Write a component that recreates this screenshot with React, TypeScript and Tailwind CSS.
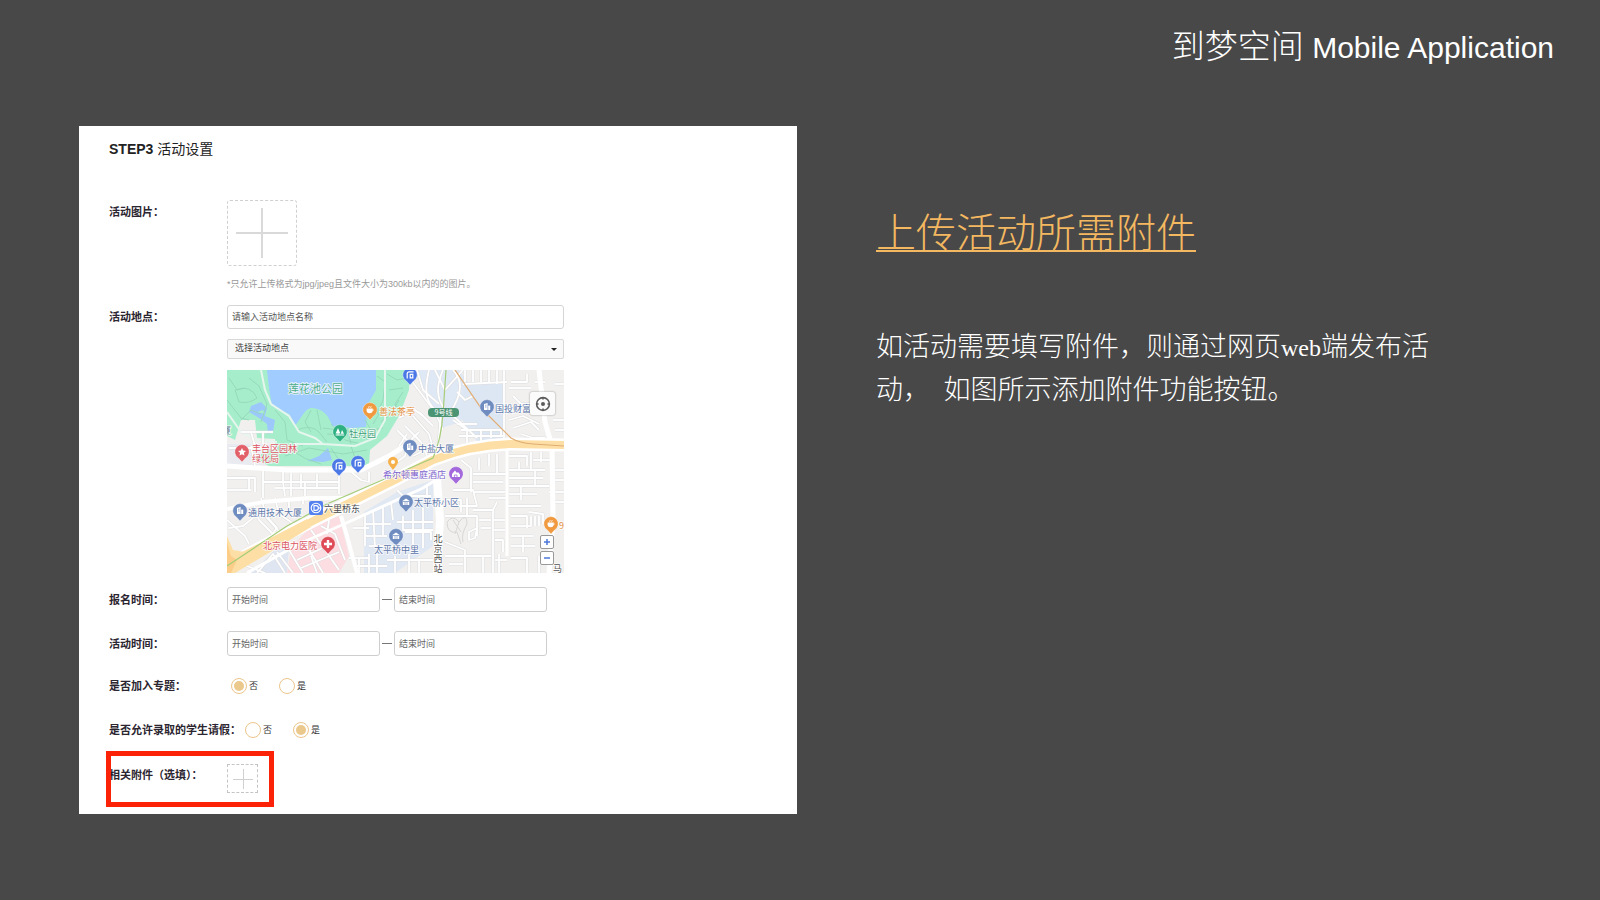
import type { ReactNode } from 'react';

interface PinProps {
  x: number;
  y: number;
  color: string;
  children?: ReactNode;
}

interface MapLabelProps {
  x: number;
  y: number;
  color: string;
  size?: number;
  anchor?: 'start' | 'middle';
  children: ReactNode;
}

const parkPaths = [
  'M0 30 L14 48 L22 50', 'M22 8 L32 16 L40 34 L34 52', 'M8 20 Q24 14 30 28 Q22 34 12 32 Z',
  'M48 40 L58 52 L60 70 L76 76', 'M70 60 Q84 54 92 62 L100 72', 'M96 58 L128 62 L142 70',
  'M104 54 L118 70 L134 74', 'M120 58 L124 74', 'M100 64 L146 66', 'M150 6 L158 12 L156 30 L150 44',
  'M160 4 L170 10 L180 8', 'M162 20 L176 18', 'M154 52 L164 44 L172 30', 'M64 80 Q78 90 94 94',
  'M58 86 L82 78 L116 84 L140 80', 'M104 78 L112 90', 'M124 76 L128 88', 'M2 8 L10 20 L18 18',
  'M84 40 L78 52 L84 62', 'M90 40 L94 60', 'M138 50 L144 60 L156 58', 'M14 50 L24 40 L34 44',
  'M146 54 L152 44 L148 34', 'M176 22 L168 34 L172 42',
];

const minorRoads = [
  // west blocks
  'M0 108 H28 V122', 'M36 101 V128', 'M36 112 H56 L58 126', 'M56 101 V112 H112', 'M64 103 V126',
  'M74 104 V118 H112', 'M78 112 V126', 'M90 104 V118', 'M112 102 V124', 'M48 118 H76', 'M0 120 H24',
  'M22 108 V120', 'M122 100 L134 110 L142 112 V102', 'M28 76 L24 62', 'M36 62 V74', 'M14 62 H46',
  'M2 78 H50', 'M24 76 L28 96', 'M34 128 L40 148 L58 168', 'M26 132 L32 150 L52 170',
  'M0 150 L18 166 L22 174', 'M36 142 L50 158 L44 166', 'M48 128 L52 144 L70 156',
  'M2 158 L16 156 L26 148', 'M62 130 V142', 'M76 128 V134',
  // hospital and south
  'M30 203 L46 184 L58 203', 'M50 182 L66 203', 'M20 196 L38 203', 'M62 180 L76 203', 'M76 170 L96 203',
  'M84 160 L112 200', 'M94 156 L108 164 L118 190', 'M70 190 L104 174', 'M74 198 L112 182',
  'M102 150 L100 164', 'M84 186 L90 203', 'M126 158 L142 158', 'M122 188 H142', 'M126 196 H160', 'M132 188 V203',
  // residential
  'M138 144 V176', 'M146 140 L148 178', 'M156 136 V166', 'M138 154 H164', 'M138 166 H160',
  'M164 132 L166 150', 'M142 176 H166', 'M142 184 V203', 'M150 184 V203', 'M170 120 L176 126 H204',
  'M176 146 V160 H206', 'M186 140 V176', 'M196 138 V178', 'M170 152 H206', 'M178 162 H204 V170',
  'M160 190 H206', 'M168 186 V203', 'M182 184 V203', 'M192 190 V203', 'M200 114 V130',
  // junction
  'M170 60 L182 72 L178 86 L170 92', 'M172 48 L188 40 L196 46', 'M178 56 L194 72 L200 86',
  'M186 46 L202 64 L206 78', 'M192 42 L206 56', 'M180 64 L172 76', 'M192 62 L184 70', 'M186 86 L198 80 L208 84',
  'M184 10 L208 42 L216 60', 'M190 0 L196 20 L212 34', 'M202 0 C196 24 200 36 214 44',
  'M216 0 C210 14 208 26 218 40', 'M208 0 L218 20 L236 0', 'M226 0 C236 10 236 24 222 44',
  'M214 44 L210 88', 'M222 42 L250 68', 'M226 50 L240 60 V78', 'M236 14 L280 12', 'M238 0 V12', 'M246 0 V12',
  'M254 0 V12', 'M262 0 V12', 'M270 0 V14', 'M230 22 L238 30 L246 26', 'M230 54 H250', 'M232 66 H276',
  'M234 60 H274 V66', 'M254 60 V74', 'M264 60 V68', 'M277 0 V72', 'M284 12 H300 V4', 'M282 18 H304',
  'M286 26 L294 34 H304', 'M284 40 L300 42', 'M282 50 L296 46 L312 54', 'M286 58 L304 52 L312 60',
  'M294 64 L306 68 H318', 'M308 12 H318', 'M328 14 H337', 'M326 50 H337', 'M328 60 H337',
  // east grid
  'M234 90 L244 98 V122', 'M226 120 H246 L250 136 H226', 'M246 104 H280', 'M252 88 V100', 'M262 84 V96',
  'M270 84 V104', 'M246 112 H276', 'M246 122 H278', 'M240 128 V146', 'M218 130 H234 V142', 'M218 146 H250 V166',
  'M282 86 H300 V96', 'M282 100 H318', 'M282 108 H316', 'M282 116 H322', 'M282 124 H310', 'M292 92 V100',
  'M304 82 V100', 'M308 100 V116', 'M294 116 V130', 'M306 90 H324', 'M314 82 V92', 'M322 122 H337',
  'M326 100 H337', 'M326 110 H337', 'M327 132 H337', 'M281 136 H314', 'M284 146 H300 V158', 'M284 156 H304',
  'M284 166 H306', 'M284 176 H308', 'M284 188 H300 V203', 'M296 166 V182', 'M302 142 L316 144 V154',
  'M304 146 V156', 'M308 146 V156', 'M312 146 V156', 'M266 140 V203', 'M266 150 H278', 'M266 160 H278',
  'M268 170 H276 V182', 'M268 190 H280', 'M246 140 H266 L270 132', 'M252 150 H264', 'M254 158 H264',
  'M242 162 L250 158 L248 168 L242 170 Z', 'M218 172 L238 180 V203', 'M218 186 H264', 'M256 186 V203',
  'M222 194 H236', 'M272 184 V203', 'M312 186 V203', 'M262 128 H280',
];

const mainRoads = [
  { d: 'M0 96 L60 100 H134 L162 86 L184 72', width: 5 },
  { d: 'M0 139 L36 132 L82 128 H132', width: 4 },
  { d: 'M114 146 L120 166 L130 203', width: 4 },
  { d: 'M210 108 L213 150 L210 203', width: 8 },
  { d: 'M280 74 V186', width: 3 },
  { d: 'M312 0 L318 52 L325 76 L326 150 L322 203', width: 5 },
  { d: 'M20 203 L70 175 L126 150 L196 118 L212 108', width: 3 },
];

const formLabel = 'shrink-0 min-w-[118px] text-[11px] leading-4 font-bold text-[#2b2530]';
const dateInput =
  'h-[25px] w-[153px] min-w-0 rounded-[3px] border border-[#ccced0] bg-white px-1 text-[9px] text-[#555] placeholder:text-[#666] outline-none';

const Pin = ({ x, y, color, children }: PinProps) => (
  <g transform={`translate(${x} ${y})`}>
    <path d="M0 10 L-3.6 6 A7.2 7.2 0 1 1 3.6 6 Z" fill={color} stroke="#fff" strokeOpacity="0.6" strokeWidth="0.6" />
    {children}
  </g>
);

const MapLabel = ({ x, y, color, size = 9, anchor = 'start', children }: MapLabelProps) => (
  <text
    x={x}
    y={y}
    fill={color}
    fontSize={size}
    textAnchor={anchor}
    dominantBaseline="central"
    stroke="#fff"
    strokeWidth="1.6"
    strokeOpacity="0.8"
    paintOrder="stroke"
  >
    {children}
  </text>
);

const BuildingGlyph = () => (
  <g fill="#fff">
    <path d="M-3 3 V-3 L0.6 -4 V3 Z" />
    <path d="M1.2 3 V-1.4 H3.2 V3 Z" />
    <path d="M-2 -1.8 H-0.4 M-2 0 H-0.4" stroke="#6f8cc0" strokeWidth="0.7" />
  </g>
);

const HomeGlyph = () => (
  <g fill="#fff">
    <path d="M-4 -0.8 L0 -3.6 L4 -0.8 Z" />
    <path d="M-3.2 0 H3.2 V3 H-3.2 Z" />
    <path d="M-1 0 V3 M1 0 V3" stroke="#6f8cc0" strokeWidth="0.6" />
  </g>
);

const BusGlyph = () => (
  <path d="M3.6 -3.2 H-0.8 Q-2.8 -3.2 -2.8 -1.2 V3.6 M3.4 -0.6 H0.2 V2.8 H2.8 V-0.4" fill="none" stroke="#fff" strokeWidth="1.2" />
);

const CupGlyph = () => (
  <g>
    <path d="M-3.4 -1.6 H2.6 V0.6 Q2.6 3.2 -0.4 3.2 Q-3.4 3.2 -3.4 0.6 Z" fill="#fff" />
    <path d="M2.4 -0.8 Q4.4 -0.6 2.2 1.2 M-1.4 -2.2 L-0.8 -3.8 M0.6 -2.2 L1.2 -3.8" fill="none" stroke="#fff" strokeWidth="0.9" />
  </g>
);

const CityMap = () => (
  <svg viewBox="0 0 337 203" className="block w-full font-['Noto_Sans_CJK_SC',sans-serif]" role="img" aria-label="活动地点">
    <rect width="337" height="203" fill="#f1f0ee" />

    {/* districts */}
    <path d="M0 74 H44 V95 H0 Z" fill="#e9ebf1" />
    <path d="M188 0 H232 L246 20 L234 52 L214 58 L200 30 Z" fill="#dfe8f5" />
    <path d="M238 14 H277 V72 L252 74 L240 58 L232 44 Z" fill="#dde6f3" />
    <path d="M137 142 L170 122 L206 110 V176 L168 203 H137 Z" fill="#e0e8f3" />
    <path d="M24 203 L48 180 L62 178 L60 203 Z" fill="#dfe6f1" />
    <path d="M60 203 L64 178 L84 156 L112 146 L122 186 L112 203 Z" fill="#fbdde2" />

    {/* park */}
    <path d="M0 0 H183 L182 20 L172 46 L160 66 L143 80 L142 96 H42 L28 88 L48 75 V69 L30 68 L28 50 L14 50 L8 70 L0 66 Z" fill="#a6eecb" />
    <path d="M40 0 H149 V20 L141 34 L139 57 L125 58 L105 56 C102 44 94 38 84 38 C76 40 74 50 68 55 L62 44 L45 36 L42 18 Z" fill="#a0ccff" />
    <path d="M24 36 L34 32 L40 38 L38 46 L48 50 L46 62 L41 64 L40 54 L32 48 L22 42 Z" fill="#9dc8fb" />
    <path d="M80 91 L92 86 L101 78 L105 90 L96 92 Z" fill="#9dc8fb" />
    <path d="M30 42 L36 40 L38 44 Z" fill="#a6eecb" />
    <g fill="none" stroke="#94d6b9" strokeWidth="0.9">
      {parkPaths.map(d => <path key={d} d={d} />)}
    </g>
    <g fill="none" stroke="#e6f6ee" strokeWidth="2">
      <path d="M34 0 L38 20 L44 34 L62 46 L72 62 L88 68 L96 74 L128 76 L148 68 L158 50 V0" />
      <path d="M0 42 L14 62 L30 70 L50 72" />
      <path d="M68 74 H96" />
    </g>

    {/* streets */}
    <g fill="none" stroke="#dcdcdd" strokeWidth="2.8" strokeLinejoin="round">
      {minorRoads.map(d => <path key={d} d={d} />)}
    </g>
    <g fill="none" stroke="#fff" strokeWidth="1.8" strokeLinejoin="round">
      {minorRoads.map(d => <path key={d} d={d} />)}
    </g>
    <g fill="none" stroke="#fff">
      {mainRoads.map(road => <path key={road.d} d={road.d} strokeWidth={road.width} />)}
    </g>
    <g fill="none" stroke="#d9d7d6" strokeWidth="1">
      <path d="M220 152 Q226 144 232 152 Q240 142 240 154 Q234 164 236 172 M220 152 Q220 164 230 162 L234 174 M226 150 L234 162 M232 152 L228 164" />
    </g>

    {/* ring road */}
    <path d="M0 196 L44 172 L100 144 L136 126 L170 109 L206 90 Q244 75 284 74 L337 75" fill="none" stroke="#fff" strokeWidth="13" />
    <path d="M0 194 L44 172 L100 144 L136 126 L170 109 L206 90 Q244 75 284 74 L337 75" fill="none" stroke="#fddfa6" strokeWidth="8" />
    <path d="M0 166 L6 180 L18 182 L44 168 L80 149 L84 157 L50 178 L8 203 H0 Z" fill="#fddfa6" />
    <path d="M0 172 L4 186 L10 190 L4 203 H0 Z" fill="#fbcd88" />

    {/* metro lines */}
    <path d="M0 196 L60 156 L100 134 L160 108 L206 88 Q214 70 216 44 L219 0" fill="none" stroke="#a5cd78" strokeWidth="1.2" />
    <path d="M228 0 L254 38 L284 68 Q292 73 306 74 L337 76" fill="none" stroke="#e0ac72" strokeWidth="1.2" />

    <MapLabel x={61} y={18} color="#4fae8c" size={11}>莲花池公园</MapLabel>
    <MapLabel x={-5} y={60} color="#666f88">厦</MapLabel>

    <Pin x={143} y={40} color="#f0993f"><CupGlyph /></Pin>
    <MapLabel x={152} y={41} color="#e58d3a">善法茶亭</MapLabel>

    <Pin x={113} y={62} color="#2fb083">
      <path d="M-2 -4 L0.4 1.6 H-4.4 Z M-2.4 1.6 H-1.6 V3 H-2.4 Z M2 -2 L4 1.8 H0.8 Z M-4.4 2.6 H4.2 V3.4 H-4.4 Z" fill="#fff" />
    </Pin>
    <MapLabel x={122} y={63} color="#3f9e79">牡丹园</MapLabel>

    <Pin x={15} y={82} color="#e2606a">
      <path d="M0 -4 L1.2 -1.4 L4 -1.1 L1.9 0.8 L2.5 3.6 L0 2.2 L-2.5 3.6 L-1.9 0.8 L-4 -1.1 L-1.2 -1.4 Z" fill="#fff" />
    </Pin>
    <MapLabel x={25} y={78} color="#dc5563">丰台区园林</MapLabel>
    <MapLabel x={25} y={88} color="#dc5563">绿化局</MapLabel>

    <Pin x={112} y={96} color="#4b78e6"><BusGlyph /></Pin>
    <Pin x={131} y={93} color="#4b78e6"><BusGlyph /></Pin>
    <Pin x={183} y={5} color="#4b78e6"><BusGlyph /></Pin>

    <g transform="translate(166 92)">
      <path d="M0 8 L-3.4 3.4 A5 5 0 1 1 3.4 3.4 Z" fill="#f6b04c" />
      <circle r="2" fill="#fff" />
    </g>
    <MapLabel x={156} y={104} color="#8064cf">希尔顿惠庭酒店</MapLabel>
    <Pin x={229} y={104} color="#a268dc">
      <path d="M-4 3 V0 L-1 -3.4 L1 -1 L2 -2 L4 0.6 V3 Z" fill="#fff" />
      <path d="M-1.6 3 V1 H1 V3" fill="none" stroke="#a268dc" strokeWidth="0.8" />
    </Pin>

    <rect x="201" y="38" width="31" height="9" rx="4" fill="#4b9473" />
    <text x="216.5" y="42" fill="#fff" fontSize="7" textAnchor="middle" dominantBaseline="central">9号线</text>

    <Pin x={260} y={37} color="#6f8cc0"><BuildingGlyph /></Pin>
    <MapLabel x={268} y={38} color="#5c76aa">国投财富</MapLabel>
    <Pin x={183} y={77} color="#6f8cc0"><BuildingGlyph /></Pin>
    <MapLabel x={191} y={78} color="#5c76aa">中盐大厦</MapLabel>
    <Pin x={179} y={132} color="#6f8cc0"><HomeGlyph /></Pin>
    <MapLabel x={187} y={132} color="#5c76aa">太平桥小区</MapLabel>
    <Pin x={169} y={166} color="#6f8cc0"><HomeGlyph /></Pin>
    <MapLabel x={147} y={179} color="#5c76aa">太平桥中里</MapLabel>
    <Pin x={13} y={141} color="#6f8cc0"><BuildingGlyph /></Pin>
    <MapLabel x={21} y={142} color="#5c76aa">通用技术大厦</MapLabel>

    <rect x="82" y="131" width="14" height="14" rx="2" fill="#5682ee" />
    <circle cx="89" cy="138" r="4.8" fill="none" stroke="#fff" strokeWidth="1.1" />
    <path d="M87 135.6 H89 Q91.4 135.8 91.4 138 Q91.4 140.2 89 140.4 H87 Z M91 138 H94" fill="none" stroke="#fff" strokeWidth="1.1" />
    <MapLabel x={97} y={138} color="#45484f">六里桥东</MapLabel>

    <MapLabel x={36} y={175} color="#dc5563">北京电力医院</MapLabel>
    <Pin x={101} y={174} color="#de4c58">
      <path d="M-1.2 -4 H1.2 V-1.2 H4 V1.2 H1.2 V4 H-1.2 V1.2 H-4 V-1.2 H-1.2 Z" fill="#fff" />
    </Pin>

    {['北', '京', '西', '站'].map((char, i) => (
      <MapLabel key={char} x={211} y={168 + i * 10} color="#555" anchor="middle">{char}</MapLabel>
    ))}
    <Pin x={324} y={154} color="#f0993f"><CupGlyph /></Pin>
    <MapLabel x={332} y={155} color="#e58d3a">9</MapLabel>
    <MapLabel x={326} y={198} color="#555">马</MapLabel>
  </svg>
);

const MapPanel = () => (
  <div className="relative mt-[11px] overflow-hidden">
    <CityMap />
    <button
      type="button"
      aria-label="定位"
      className="absolute top-[22px] right-[9px] flex h-[23px] w-[25px] items-center justify-center rounded-[2px] bg-[#fbfbfb] shadow-[0_0_2px_#888]"
    >
      <svg viewBox="0 0 16 16" className="size-4" fill="none" stroke="#5b5b5b" strokeWidth="1.6">
        <circle cx="8" cy="8" r="6.4" />
        <circle cx="8" cy="8" r="2" fill="#5b5b5b" stroke="none" />
        <path d="M8 1.6 V3.6 M8 12.4 V14.4 M1.6 8 H3.6 M12.4 8 H14.4" />
      </svg>
    </button>
    <div className="absolute right-[10px] bottom-2 flex flex-col gap-[2px]">
      <button type="button" aria-label="放大" className="flex size-[14px] items-center justify-center rounded-[2px] border border-[#999] bg-white">
        <svg viewBox="0 0 8 8" className="size-2" stroke="#4a78d8" strokeWidth="1.5"><path d="M1 4 H7 M4 1 V7" /></svg>
      </button>
      <button type="button" aria-label="缩小" className="flex size-[14px] items-center justify-center rounded-[2px] border border-[#999] bg-white">
        <svg viewBox="0 0 8 8" className="size-2" stroke="#4a78d8" strokeWidth="1.5"><path d="M1 4 H7" /></svg>
      </button>
    </div>
  </div>
);

const DateRange = ({ id, label }: { id: string; label: string }) => (
  <div className="flex items-center">
    <label htmlFor={`${id}-start`} className={formLabel}>{label}</label>
    <input id={`${id}-start`} type="text" placeholder="开始时间" className={dateInput} />
    <span className="mx-[2px] h-px w-[10px] bg-[#777]" />
    <input id={`${id}-end`} type="text" placeholder="结束时间" aria-label="结束时间" className={dateInput} />
  </div>
);

const RadioRow = ({ name, label, value }: { name: string; label: string; value: string }) => (
  <fieldset className="flex h-4 items-center">
    <legend className={`float-left ${formLabel}`}>{label}</legend>
    <div className="ml-1 flex gap-[21px]">
      {['否', '是'].map(option => (
        <label key={option} className="flex items-center gap-[2px] text-[9px] leading-4 text-[#333]">
          <input
            type="radio"
            name={name}
            defaultChecked={option === value}
            className="size-4 appearance-none rounded-full border border-[#ecc68c] bg-white bg-clip-content p-[2px] checked:bg-[#ebc88b]"
          />
          {option}
        </label>
      ))}
    </div>
  </fieldset>
);

const ActivityForm = () => (
  <form className="min-w-0 bg-white px-[30px] pt-[15px] pb-[21px] font-['Liberation_Sans','Noto_Sans_CJK_SC',sans-serif]">
    <h2 className="text-[14px] leading-4 text-[#222]">
      <span className="font-bold">STEP3</span> 活动设置
    </h2>

    <div className="mt-[43px] flex">
      <span className={`mt-1 ${formLabel}`}>活动图片：</span>
      <div>
        <button type="button" aria-label="上传活动图片" className="flex h-[66px] w-[70px] items-center justify-center rounded-[3px] border border-dashed border-[#d0d0d0]">
          <svg viewBox="0 0 52 50" className="h-[50px] w-[52px]" stroke="#d9d9d9" strokeWidth="2">
            <path d="M0 25 H52 M26 0 V50" />
          </svg>
        </button>
        <p className="mt-3 text-[9px] leading-3 text-[#999]">*只允许上传格式为jpg/jpeg且文件大小为300kb以内的的图片。</p>
      </div>
    </div>

    <div className="mt-[15px] flex">
      <label htmlFor="place" className={`mt-1 ${formLabel}`}>活动地点：</label>
      <div className="min-w-0 w-full max-w-[337px]">
        <input
          id="place"
          type="text"
          placeholder="请输入活动地点名称"
          className="block h-6 w-full rounded-[3px] border border-[#d3d5d7] bg-white px-1 text-[9px] placeholder:text-[#555] outline-none"
        />
        <div className="relative mt-[10px]">
          <select aria-label="选择活动地点" className="block h-5 w-full appearance-none rounded-[2px] border border-[#d8d8d8] bg-[#f9f9f9] px-[7px] text-[9px] text-[#444] outline-none">
            <option>选择活动地点</option>
          </select>
          <svg viewBox="0 0 6 3" className="pointer-events-none absolute top-[9px] right-[7px] h-[3px] w-[6px]"><path d="M0 0 H6 L3 3 Z" fill="#222" /></svg>
        </div>
        <MapPanel />
      </div>
    </div>

    <div className="mt-[14px] flex flex-col gap-[19px]">
      <DateRange id="signup" label="报名时间：" />
      <DateRange id="activity" label="活动时间：" />
    </div>

    <div className="mt-[22px] flex flex-col gap-[28px]">
      <RadioRow name="topic" label="是否加入专题：" value="否" />
      <RadioRow name="leave" label="是否允许录取的学生请假：" value="是" />
    </div>

    <div className="relative mt-[26px] flex">
      <span className={`mt-[3px] ${formLabel}`}>相关附件（选填）：</span>
      <button type="button" aria-label="添加附件" className="flex h-[29px] w-[31px] items-center justify-center border border-dashed border-[#c4c4c4]">
        <svg viewBox="0 0 20 20" className="size-5" stroke="#d0d0d0"><path d="M0 10.5 H20 M10.5 0 V20" /></svg>
      </button>
      <div className="pointer-events-none absolute -top-[13px] -left-[3px] h-[56px] w-[168px] border-[5px] border-[#fc2207]" />
    </div>
  </form>
);

export default function App() {
  return (
    <div className="min-h-screen bg-[#484848] font-['Liberation_Sans','Noto_Sans_CJK_SC',sans-serif] text-white">
      <header className="flex h-[126px] justify-end px-[46px] pt-[23px]">
        <h1 className="text-[30px] leading-[48px]">
          <span className="text-[33px] font-light">到梦空间</span> Mobile Application
        </h1>
      </header>
      <main className="grid grid-cols-2 items-start gap-[79px] pr-1.5 pb-[85px] pl-[79px]">
        <ActivityForm />
        <section className="min-w-0 pt-[77px]">
          <h2 className="text-[40px] leading-[60px] font-light text-[#f4b860] underline decoration-2 underline-offset-[3px]">
            上传活动所需附件
          </h2>
          <p className="mt-[63px] max-w-[570px] font-['Liberation_Serif','Noto_Sans_CJK_SC',serif] text-[27px] leading-[42px] font-light">
            如活动需要填写附件，则通过网页<span className="text-[24px]">web</span>端发布活动，&ensp;如图所示添加附件功能按钮。
          </p>
        </section>
      </main>
    </div>
  );
}
